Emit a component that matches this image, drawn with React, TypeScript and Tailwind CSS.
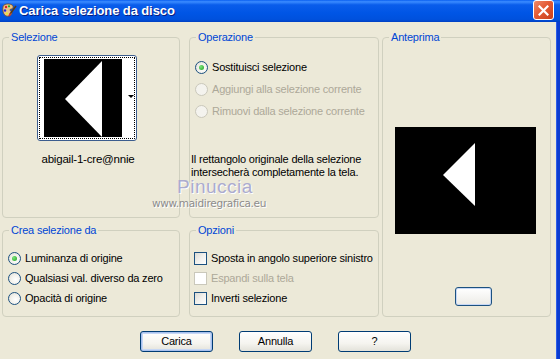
import React from "react";

const font = "font-['Liberation_Sans',Arial,sans-serif]";

function Radio({ checked, disabled }: { checked?: boolean; disabled?: boolean }) {
  return (
    <span
      className={
        "relative flex h-[13px] w-[13px] shrink-0 items-center justify-center rounded-full border " +
        (disabled
          ? "border-[#CAC8BB] bg-[#F4F3EE]"
          : "border-[#1C5180] bg-[radial-gradient(circle_at_60%_60%,#FFFFFF_0%,#F2F1EC_50%,#DCDAD0_100%)]")
      }
    >
      {checked && (
        <span className="h-[5px] w-[5px] rounded-full bg-[radial-gradient(circle_at_35%_35%,#7BE37B,#21A121)]" />
      )}
    </span>
  );
}

function Check({ disabled }: { disabled?: boolean }) {
  return (
    <span
      className={
        "h-[13px] w-[13px] shrink-0 border " +
        (disabled
          ? "border-[#CAC8BB] bg-white"
          : "border-[#1C5180] bg-[linear-gradient(135deg,#DCDBD5_0%,#F1F0EC_50%,#FFFFFF_100%)]")
      }
    />
  );
}

function Group({
  title,
  className,
  children,
}: {
  title: string;
  className: string;
  children?: React.ReactNode;
}) {
  return (
    <fieldset className={"rounded-[4px] border border-[#D0D0BF] " + className}>
      <legend className="ml-[6px] px-[2px] leading-[14px] text-[#0046D5]">{title}</legend>
      {children}
    </fieldset>
  );
}

function Row({ children, dim }: { children: React.ReactNode; dim?: boolean }) {
  return (
    <div className={"flex items-center gap-[4px] whitespace-nowrap leading-[13px] " + (dim ? "text-[#ACA899]" : "")}>
      {children}
    </div>
  );
}

function XpButton({ label, def }: { label: string; def?: boolean }) {
  return (
    <button
      className={
        "h-[21px] w-[73px] rounded-[3px] border border-[#003C74] bg-[linear-gradient(to_bottom,#FFFFFF_0%,#F5F4EF_60%,#E3E2DA_100%)] text-[11px] text-black " +
        (def ? "shadow-[inset_0_0_0_1px_#A7C0EE,inset_0_0_0_2px_#C6D7F5]" : "")
      }
    >
      {label}
    </button>
  );
}

function PaletteIcon() {
  return (
    <svg width="16" height="16" viewBox="0 0 16 16">
      <path d="M2 4 C2 1 8 0 11 2 C13 3.5 12 6 10 6 C8.5 6 9 8 10.5 9 C12 10.5 9 14 5.5 13 C2 12 1.5 7 2 4Z" fill="#E8C48A" stroke="#7A4B1C" strokeWidth="0.8" />
      <circle cx="5" cy="4" r="1.2" fill="#D22" />
      <circle cx="8" cy="3.3" r="1.1" fill="#2A2" />
      <circle cx="4" cy="7.5" r="1.2" fill="#22D" />
      <circle cx="6" cy="10.5" r="1.1" fill="#EE2" />
      <path d="M15 3 L9 11" stroke="#5A3A14" strokeWidth="1.6" />
      <path d="M9.5 10.5 L8 13" stroke="#C33" strokeWidth="1.6" />
    </svg>
  );
}

export default function App() {
  return (
    <div className={"h-[359px] w-[560px] overflow-hidden bg-[#ECE9D8] text-[11px] tracking-[-0.2px] text-black " + font}>
      {/* title bar */}
      <div className="relative flex h-[22px] items-center bg-[linear-gradient(to_bottom,#0A5FF0_0%,#3B8CFF_8%,#0A5DEB_22%,#0055E5_60%,#0051DD_88%,#0040C2_100%)] pl-[1px]">
        <PaletteIcon />
        <span className="ml-[2px] text-[13px] font-bold tracking-[-0.1px] text-white [text-shadow:1px_1px_0_#0A1E80]">
          Carica selezione da disco
        </span>
        <span className="absolute right-[6px] top-0 flex h-[20px] w-[21px] items-center justify-center rounded-[3px] border border-white bg-[linear-gradient(135deg,#F08A6A_0%,#E45B35_45%,#C8401C_100%)]">
          <svg width="11" height="11" viewBox="0 0 11 11">
            <path d="M1.5 1.5 L9.5 9.5 M9.5 1.5 L1.5 9.5" stroke="white" strokeWidth="2.2" strokeLinecap="square" />
          </svg>
        </span>
      </div>

      <div className="flex h-[337px]">
        <div className="relative flex flex-1 flex-col">
          <div className="flex pl-[2px] pt-[8px]">
            {/* left column */}
            <div className="flex w-[178px] flex-col gap-[5px]">
              <Group title="Selezione" className="h-[188px]">
                <div className="flex flex-col items-center pt-[11px]">
                  <div className="ml-[-8px] flex h-[86px] w-[100px] rounded-[3px] border border-[#3C5D8E] bg-white p-[1px]">
                    <div className="flex h-full w-full items-stretch border border-dotted border-black pl-[4px] pt-[1px] pb-[2px]">
                      <div className="h-[78px] w-[78px] bg-black">
                        <svg width="78" height="78" viewBox="0 0 78 78">
                          <polygon points="21,40 58,2 58,78" fill="white" />
                        </svg>
                      </div>
                      <div className="relative flex-1 bg-white">
                        <span className="absolute right-[0px] top-[36px] h-0 w-0 border-x-[3px] border-t-[3px] border-x-transparent border-t-black" />
                      </div>
                    </div>
                  </div>
                  <span className="ml-[-6px] mt-[10px] text-[11.5px]">abigail-1-cre@nnie</span>
                </div>
              </Group>
              <Group title="Crea selezione da" className="h-[94px]">
                <div className="flex flex-col gap-[7px] pl-[5px] pt-[15px]">
                  <Row>
                    <Radio checked />
                    <span>Luminanza di origine</span>
                  </Row>
                  <Row>
                    <Radio />
                    <span>Qualsiasi val. diverso da zero</span>
                  </Row>
                  <Row>
                    <Radio />
                    <span>Opacità di origine</span>
                  </Row>
                </div>
              </Group>
            </div>

            {/* middle column */}
            <div className="ml-[9px] flex w-[190px] flex-col gap-[5px]">
              <Group title="Operazione" className="h-[188px]">
                <div className="flex flex-col gap-[9px] pl-[5px] pt-[17px]">
                  <Row>
                    <Radio checked />
                    <span>Sostituisci selezione</span>
                  </Row>
                  <Row dim>
                    <Radio disabled />
                    <span>Aggiungi alla selezione corrente</span>
                  </Row>
                  <Row dim>
                    <Radio disabled />
                    <span>Rimuovi dalla selezione corrente</span>
                  </Row>
                </div>
                <p className="mt-[35px] pl-[1px] leading-[13px]">
                  Il rettangolo originale della selezione
                  <br />
                  intersecherà completamente la tela.
                </p>
              </Group>
              <Group title="Opzioni" className="h-[94px]">
                <div className="flex flex-col gap-[7px] pl-[4px] pt-[15px]">
                  <Row>
                    <Check />
                    <span>Sposta in angolo superiore sinistro</span>
                  </Row>
                  <Row dim>
                    <Check disabled />
                    <span>Espandi sulla tela</span>
                  </Row>
                  <Row>
                    <Check />
                    <span>Inverti selezione</span>
                  </Row>
                </div>
              </Group>
            </div>

            {/* right column */}
            <Group title="Anteprima" className="ml-[3px] h-[287px] w-[169px]">
              <div className="flex flex-col items-center pt-[83px]">
                <div className="ml-[-2px] h-[107px] w-[141px] bg-black">
                  <svg width="141" height="107" viewBox="0 0 141 107">
                    <polygon points="48,48 80,16 80,79" fill="white" />
                  </svg>
                </div>
                <div className="ml-[14px] mt-[53px] h-[19px] w-[37px] rounded-[3px] border border-[#1C5180] bg-[linear-gradient(to_bottom,#FFFFFF,#ECEBE6)] shadow-[inset_0_0_0_1px_#C6D7F5]" />
              </div>
            </Group>
          </div>

          {/* buttons */}
          <div className="mt-[14px] flex gap-[26px] pl-[140px]">
            <XpButton label="Carica" def />
            <XpButton label="Annulla" />
            <XpButton label="?" />
          </div>

          {/* watermark */}
          <div className="pointer-events-none absolute left-[148px] top-[154px] flex w-[122px] flex-col items-center">
            <span className="ml-[12px] text-[19px] leading-[21px] tracking-[0.5px] text-[#ABABCF] [text-shadow:1px_1px_0_#FFFFFF]">
              Pinuccia
            </span>
            <span className="font-['DejaVu_Sans',sans-serif] text-[10.5px] leading-[12px] tracking-[-0.3px] text-[#8C8C8C] [text-shadow:1px_1px_0_#FFFFFF]">
              www.maidiregrafica.eu
            </span>
          </div>
        </div>
        <div className="w-[4px] bg-[#0A3CD0] shadow-[inset_1px_0_0_#2D5DE8]" />
      </div>
    </div>
  );
}
